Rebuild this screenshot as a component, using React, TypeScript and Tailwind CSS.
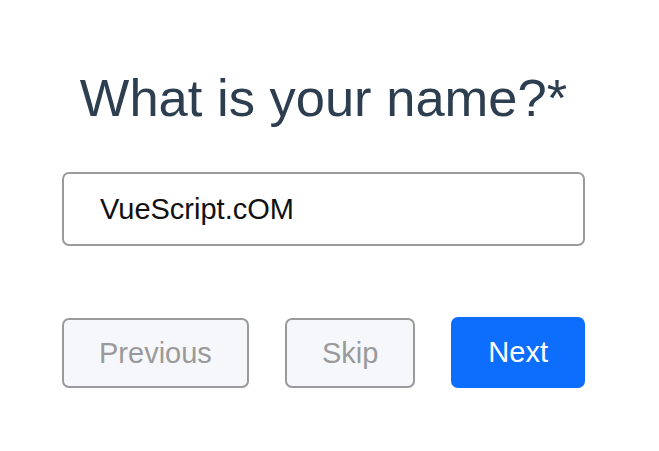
import React from "react";

export default function App() {
  return (
    <div className="min-h-[451px] w-full bg-white" style={{ fontFamily: '"Liberation Sans", Arial, sans-serif' }}>
      <div className="ml-[62px] w-[523px] pt-[68px]">
        <h1 className="text-center text-[52.5px] leading-[60px] font-normal text-[#2c3e50] whitespace-nowrap">
          What is your name?*
        </h1>
        <div className="mt-[44px] flex h-[74px] items-center rounded-[7px] border-2 border-[#9a9a9a] bg-white pl-[36px]">
          <span className="text-[29px] leading-[33px] text-[#111111]">VueScript.cOM</span>
        </div>
        <div className="mt-[72px] flex justify-between">
          <button className="flex h-[70px] items-center rounded-[7px] border-2 border-[#9a9a9a] bg-[#f5f7fb] px-[35px] text-[29px] leading-[33px] text-[#9a9a9a]">
            Previous
          </button>
          <button className="flex h-[70px] items-center rounded-[7px] border-2 border-[#9a9a9a] bg-[#f5f7fb] px-[35px] text-[29px] leading-[33px] text-[#9a9a9a]">
            Skip
          </button>
          <button className="flex h-[71px] -mt-[1px] items-center rounded-[7px] border-2 border-[#0d6efd] bg-[#0d6efd] px-[35px] text-[29px] leading-[33px] text-white">
            Next
          </button>
        </div>
      </div>
    </div>
  );
}
